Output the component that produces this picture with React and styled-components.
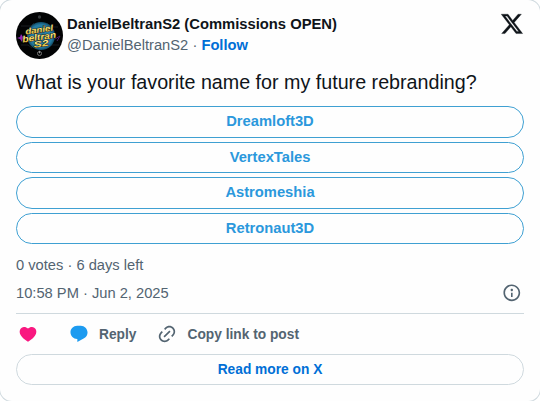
import React from "react";
import styled, { createGlobalStyle } from "styled-components";

const GlobalStyle = createGlobalStyle`
  * {
    box-sizing: border-box;
  }

  body {
    margin: 0;
    overflow: hidden;
    background-color: #fff;
    font-family: "Liberation Sans", Arial, sans-serif;
  }
`;

const Card = styled.article`
  width: 540px;
  height: 401px;
  padding: 12px 16px 0;
  overflow: hidden;
  color: #0f1419;
  background-color: #fefefe;
  border-radius: 12px;
  box-shadow: 0 0 0 1px #cfd9de;
`;

const Header = styled.header`
  display: flex;
  height: 47px;
`;

const Avatar = styled.svg`
  flex: none;
  width: 47px;
  height: 47px;
  border-radius: 50%;
`;

const Author = styled.div`
  flex: 1;
  padding: 2px 0 0 4px;
  font-size: 14.77px;
  line-height: 20px;
  white-space: nowrap;
`;

const Name = styled.div`
  font-weight: 700;
`;

const Handle = styled.div`
  margin-top: 1px;
  color: #536471;
  font-size: 14.73px;
`;

const Follow = styled.a`
  color: #006fd6;
  font-weight: 700;
`;

const Icon = styled.svg`
  flex: none;
  width: ${(props) => props.$size}px;
  height: ${(props) => props.$size}px;
  fill: ${(props) => props.$color || "#536471"};
`;

const TweetText = styled.p`
  margin: 11px 0 0;
  font-size: 19.7px;
  line-height: 24px;
  white-space: nowrap;
`;

const Poll = styled.div`
  display: grid;
  gap: 4px;
  margin-top: 12.4px;
`;

const PillButton = styled.button`
  display: block;
  width: 100%;
  height: 31.4px;
  padding: 0;
  color: #006fd6;
  font-family: inherit;
  font-size: 13.75px;
  font-weight: 700;
  line-height: 29px;
  background-color: transparent;
  border: 1px solid #cfd9de;
  border-radius: 16px;
  cursor: pointer;
`;

const PollOption = styled(PillButton)`
  padding-bottom: 1.4px;
  color: #2b98dc;
  font-size: 14.73px;
  line-height: 28px;
  border-color: #3fa0d2;
`;

const Meta = styled.div`
  display: flex;
  align-items: center;
  justify-content: space-between;
  height: 20px;
  margin-top: ${(props) => props.$top}px;
  padding-right: 2px;
  color: #536471;
  font-size: 14.7px;
`;

const Actions = styled.div`
  display: flex;
  align-items: center;
  height: 41px;
  margin-top: 10px;
  border-top: 1px solid #cfd9de;
`;

const Action = styled.div`
  display: flex;
  align-items: center;
  gap: 10px;
  margin-left: ${(props) => props.$left}px;
  color: #536471;
  font-size: 13.75px;
  font-weight: 700;
`;

const Label = styled.span`
  padding-top: 2px;
`;

const options = ["Dreamloft3D", "VertexTales", "Astromeshia", "Retronaut3D"];

const AvatarArt = () => (
  <Avatar viewBox="0 0 47 47">
    <defs>
      <radialGradient id="globe">
        <stop offset="0" stopColor="#277ba0" />
        <stop offset="0.8" stopColor="#257ca4" />
        <stop offset="1" stopColor="#124c66" />
      </radialGradient>
      <linearGradient id="gold" x2="0" y2="1">
        <stop offset="0" stopColor="#fff9c4" />
        <stop offset="0.55" stopColor="#f7dc5a" />
        <stop offset="1" stopColor="#e0a930" />
      </linearGradient>
    </defs>
    <rect width="47" height="47" fill="#020304" />
    <path d="M5 14h10l3-3M31 11l4 4h7M5 33h7l4 3M31 36l5-3h7" fill="none" stroke="#191d21" />
    <circle cx="25" cy="24" r="14" fill="url(#globe)" />
    <path d="M1 26l3-1 1-3 2 3 3 1-3 1-1 3-2-3z" fill="#8f26b5" />
    <path d="M39 27l5-3-3 5" fill="none" stroke="#51206b" />
    <g
      transform="rotate(-8 24 24)"
      fill="url(#gold)"
      stroke="#15120a"
      strokeWidth="0.8"
      paintOrder="stroke"
      fontFamily="Liberation Sans"
      fontWeight="700"
      fontStyle="italic"
      textAnchor="middle"
    >
      <text x="24" y="20.5" fontSize="8.5" textLength="28" lengthAdjust="spacingAndGlyphs">daniel</text>
      <text x="23" y="28" fontSize="9" textLength="34" lengthAdjust="spacingAndGlyphs">beltran</text>
      <text x="24" y="34.8" fontSize="8.5" textLength="15" lengthAdjust="spacingAndGlyphs">S2</text>
    </g>
    <circle cx="23.5" cy="5" r="1.7" fill="#34383a" />
    <circle cx="23.5" cy="41.5" r="2" fill="none" stroke="#777" />
    <path d="M23.5 38.8v2.5" stroke="#999" />
  </Avatar>
);

const XIcon = () => (
  <Icon viewBox="0 0 24 24" $size={23.8} $color="#0f1419">
    <path
      stroke="#0f1419"
      strokeWidth="0.35"
      d="M18.244 2.25h3.308l-7.227 8.26 8.502 11.24H16.17l-5.214-6.817L4.99 21.75H1.68l7.73-8.835L1.254 2.25H8.08l4.713 6.231zm-1.161 17.52h1.833L7.084 4.126H5.117z"
    />
  </Icon>
);

const InfoIcon = () => (
  <Icon viewBox="0 0 24 24" $size={19.6}>
    <path d="M13.5 8.5c0 .83-.67 1.5-1.5 1.5s-1.5-.67-1.5-1.5S11.17 7 12 7s1.5.67 1.5 1.5zM13 17v-5h-2v5h2zm-1 5.25c5.66 0 10.25-4.59 10.25-10.25S17.66 1.75 12 1.75 1.75 6.34 1.75 12 6.34 22.25 12 22.25zM20.25 12c0 4.56-3.69 8.25-8.25 8.25S3.75 16.56 3.75 12 7.44 3.75 12 3.75s8.25 3.69 8.25 8.25z" />
  </Icon>
);

const HeartIcon = () => (
  <Icon viewBox="0 0 24 24" $size={20} $color="#f91880">
    <path d="M20.884 13.19c-1.351 2.48-4.001 5.12-8.379 7.67l-.503.3-.504-.3c-4.379-2.55-7.029-5.19-8.382-7.67-1.36-2.5-1.41-4.86-.514-6.67.887-1.79 2.647-2.91 4.601-3.01 1.651-.09 3.368.56 4.798 2.01 1.429-1.45 3.146-2.1 4.796-2.01 1.954.1 3.714 1.22 4.601 3.01.896 1.81.846 4.17-.514 6.67z" />
  </Icon>
);

const ReplyIcon = () => (
  <Icon viewBox="0 0 24 24" $size={20} $color="#1d9bf0">
    <path d="M1.751 10c0-4.42 3.584-8 8.005-8h4.366c4.49 0 8.129 3.64 8.129 8.13 0 2.96-1.607 5.68-4.196 7.11l-8.054 4.46v-3.69h-.067c-4.49.1-8.183-3.51-8.183-8.01z" />
  </Icon>
);

const LinkIcon = () => (
  <Icon viewBox="0 0 24 24" $size={20}>
    <path d="M18.36 5.64c-1.95-1.96-5.11-1.96-7.07 0L9.88 7.05 8.46 5.64l1.42-1.42c2.73-2.73 7.16-2.73 9.9 0 2.73 2.74 2.73 7.17 0 9.9l-1.42 1.42-1.41-1.42 1.41-1.41c1.96-1.96 1.96-5.12 0-7.07zm-2.12 3.53l-7.07 7.07-1.41-1.41 7.07-7.07 1.41 1.41zm-12.02.71l1.42-1.42 1.41 1.42-1.41 1.41c-1.96 1.96-1.96 5.12 0 7.07 1.95 1.96 5.11 1.96 7.07 0l1.41-1.41 1.42 1.41-1.42 1.42c-2.73 2.73-7.16 2.73-9.9 0-2.73-2.74-2.73-7.17 0-9.9z" />
  </Icon>
);

const App = () => {
  return (
    <>
      <GlobalStyle />
      <Card>
        <Header>
          <AvatarArt />
          <Author>
            <Name>DanielBeltranS2 (Commissions OPEN)</Name>
            <Handle>
              @DanielBeltranS2 · <Follow>Follow</Follow>
            </Handle>
          </Author>
          <XIcon />
        </Header>
        <TweetText>What is your favorite name for my future rebranding?</TweetText>
        <Poll>
          {options.map((option) => (
            <PollOption key={option}>{option}</PollOption>
          ))}
        </Poll>
        <Meta $top={11}>0 votes · 6 days left</Meta>
        <Meta $top={8}>
          <span>10:58 PM · Jun 2, 2025</span>
          <InfoIcon />
        </Meta>
        <Actions>
          <Action $left={2}>
            <HeartIcon />
          </Action>
          <Action $left={31}>
            <ReplyIcon />
            <Label>Reply</Label>
          </Action>
          <Action $left={21}>
            <LinkIcon />
            <Label>Copy link to post</Label>
          </Action>
        </Actions>
        <PillButton>Read more on X</PillButton>
      </Card>
    </>
  );
};

export default App;
